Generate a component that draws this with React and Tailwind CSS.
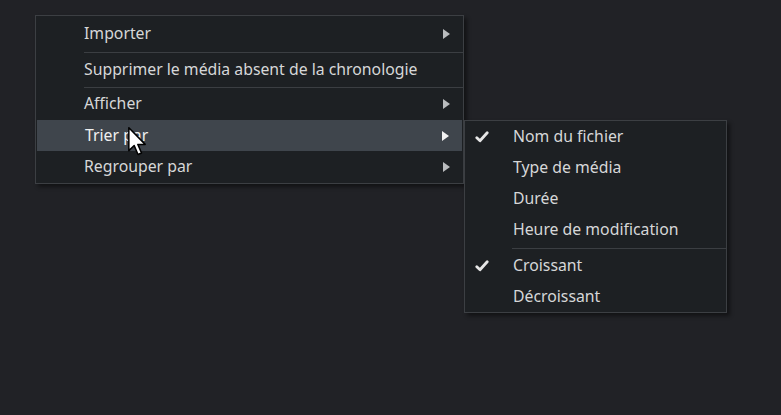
import React from "react";

const Arrow = ({ bright }) => (
  <svg width="7" height="10" viewBox="0 0 7 10" className="shrink-0">
    <path d="M0 0 L7 5 L0 10 Z" fill={bright ? "#f2f2f2" : "#b9bbbd"} />
  </svg>
);

const Check = () => (
  <svg width="14" height="12" viewBox="0 0 14 12">
    <path
      d="M1.8 6.8 L5 9.8 L12.2 1.8"
      fill="none"
      stroke="#e6e6e6"
      strokeWidth="2.8"
      strokeLinecap="round"
      strokeLinejoin="round"
    />
  </svg>
);

const Cursor = () => (
  <svg width="20" height="29" viewBox="0 0 13 19" className="absolute left-[128px] top-[127px]">
    <path
      d="M0.5 0.5 L0.5 15.5 L4 12.2 L6.5 18 L8.8 17 L6.4 11.4 L11.2 11.4 Z"
      fill="#ffffff"
      stroke="#000000"
      strokeWidth="1"
      strokeLinejoin="round"
    />
  </svg>
);

const MenuRow = ({ label, h, sub, active }) => (
  <div
    className={`flex items-center pl-[48px] pr-[13px] ${h} ${
      active ? "bg-[#3f454c] mx-[1px] pl-[47px] pr-[12px]" : ""
    }`}
  >
    <span className={`flex-1 ${active ? "text-[#f0f0f0]" : "text-[#d6d7d8]"}`}>{label}</span>
    {sub && <Arrow bright={active} />}
  </div>
);

const Sep = ({ left }) => (
  <div className={`h-px bg-[#3b3e42] ${left}`} />
);

const SubRow = ({ label, checked }) => (
  <div className="flex items-center h-[31px]">
    <div className="w-[48px] flex justify-start pl-[10px]">{checked && <Check />}</div>
    <span className="text-[#d6d7d8]">{label}</span>
  </div>
);

export default function App() {
  return (
    <div
      className="relative w-[781px] h-[415px] bg-[#212226] overflow-hidden text-[15.8px]"
      style={{ fontFamily: "'Noto Sans', 'Open Sans', sans-serif" }}
    >
      {/* main context menu */}
      <div className="absolute left-[35px] top-[15px] w-[429px] bg-[#1d2023] border border-[#3c3f43] shadow-[3px_3px_4px_rgba(0,0,0,0.45)] pb-[1px]">
        <MenuRow label="Importer" h="h-[36px]" sub />
        <Sep left="ml-[48px]" />
        <MenuRow label="Supprimer le média absent de la chronologie" h="h-[34px]" />
        <Sep left="ml-[48px]" />
        <MenuRow label="Afficher" h="h-[32px]" sub />
        <MenuRow label="Trier par" h="h-[31px]" sub active />
        <MenuRow label="Regrouper par" h="h-[31px]" sub />
      </div>

      {/* submenu */}
      <div className="absolute left-[464px] top-[120px] w-[263px] bg-[#1d2023] border border-[#3c3f43] shadow-[3px_3px_4px_rgba(0,0,0,0.45)]">
        <SubRow label="Nom du fichier" checked />
        <SubRow label="Type de média" />
        <SubRow label="Durée" />
        <SubRow label="Heure de modification" />
        <div className="pt-[3px] pb-[1px]">
          <Sep left="ml-[47px]" />
        </div>
        <SubRow label="Croissant" checked />
        <SubRow label="Décroissant" />
      </div>

      <Cursor />
    </div>
  );
}
